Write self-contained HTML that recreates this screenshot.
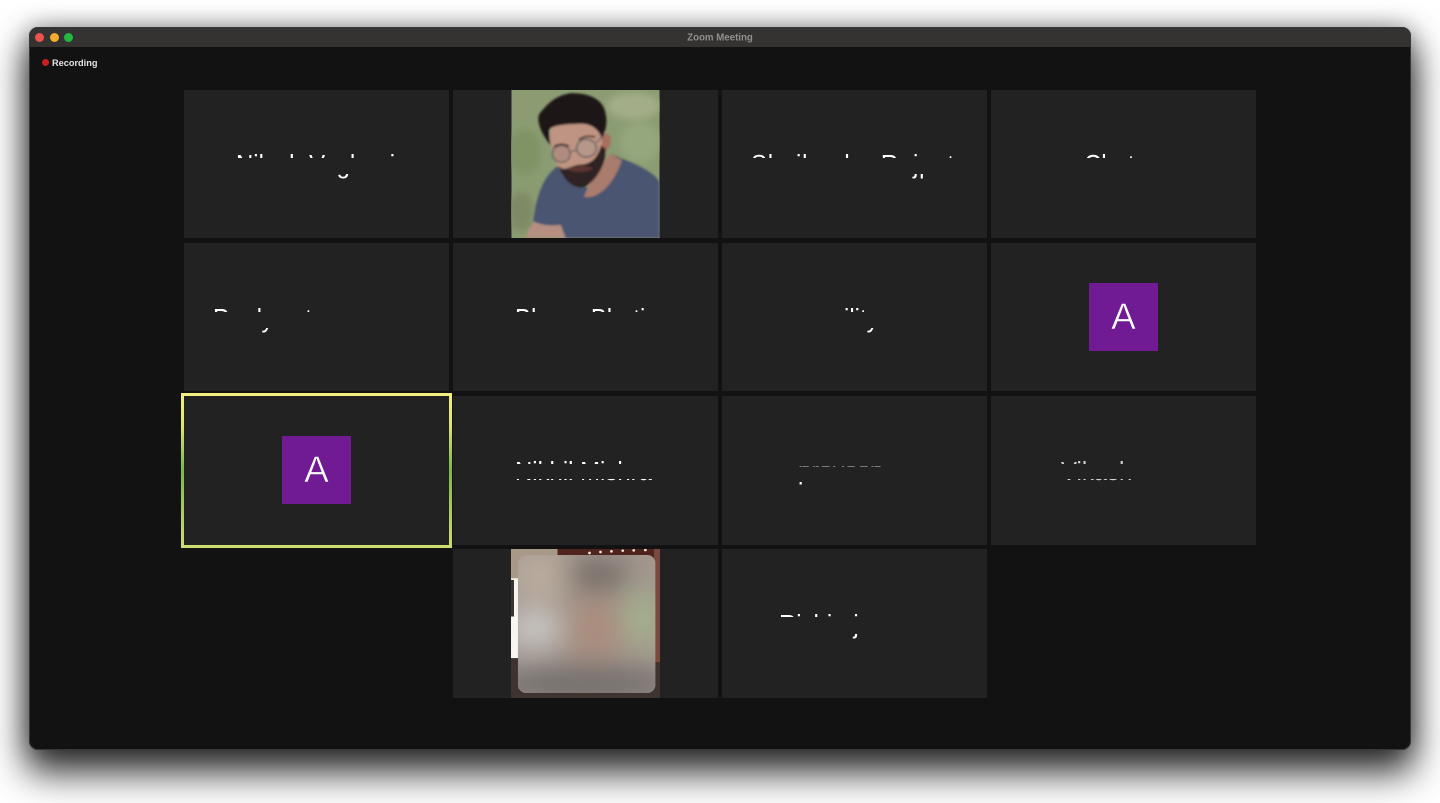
<!DOCTYPE html>
<html><head><meta charset="utf-8"><title>Zoom Meeting</title>
<style>
html,body{margin:0;padding:0;width:1440px;height:803px;overflow:hidden;background:#fff;font-family:"Liberation Sans",sans-serif}
.win{position:absolute;left:29px;top:27px;width:1382px;height:723px;background:#121212;border-radius:9px;box-shadow:0 20px 36px 3px rgba(0,0,0,.8),0 0 24px 0 rgba(0,0,0,.35)}
.edge{position:absolute;left:29px;top:27px;width:1380px;height:721px;border:1px solid #383838;border-radius:9px}
.bar{position:absolute;left:29px;top:27px;width:1382px;height:20px;background:#343332;border-radius:9px 9px 0 0}
.dot{position:absolute;width:9px;height:9px;border-radius:50%;top:33px}
.title{position:absolute;left:600px;width:240px;top:32px;text-align:center;font-size:9.7px;line-height:12px;font-weight:bold;color:#918f8e;transform:translateY(0.500px)}
.rec{position:absolute;left:52px;top:57px;font-size:9.2px;line-height:12px;font-weight:bold;color:#e4e4e4}
.t{position:absolute;background:#222;overflow:hidden}
.n{position:absolute;white-space:nowrap;font-size:26px;line-height:30px;color:#fff;transform:scaleX(.92);transform-origin:0 0}
.c{position:absolute;left:0;right:0;background:#222}
.av{position:absolute;background:#701a93;color:#fff;font-size:37px;line-height:68px;text-align:center;width:69px;height:68px;-webkit-text-stroke:.6px #701a93}
</style></head><body>
<div class="win"></div>
<div class="bar"></div>
<div class="edge"></div>
<div class="dot" style="left:35px;background:#ef5350"></div>
<div class="dot" style="left:49.500px;background:#f5ab2e"></div>
<div class="dot" style="left:64px;background:#22b83f"></div>
<div class="title">Zoom Meeting</div>
<div class="dot" style="left:42px;top:59px;width:7px;height:7px;background:#c81e1e"></div>
<div class="rec">Recording</div>

<!-- row 1 -->
<div class="t" style="left:184px;top:90px;width:265px;height:148px"><div class="n" style="left:52px;top:59px">Nilesh Vaghani</div><div class="c" style="top:68px;height:16px"></div></div>
<div class="t" style="left:453px;top:90px;width:265px;height:148px">
<svg style="position:absolute;left:58px;top:0" width="149" height="148" viewBox="31 12 448 448">
<defs><filter id="b1"><feGaussianBlur stdDeviation="3"/></filter><filter id="b2"><feGaussianBlur stdDeviation="12"/></filter><filter id="b3"><feGaussianBlur stdDeviation="42"/></filter></defs>
<rect x="31" y="12" width="448" height="448" fill="#8b9c72"/>
<g filter="url(#b2)"><ellipse cx="400" cy="60" rx="80" ry="40" fill="#a3ae88"/><ellipse cx="70" cy="200" rx="50" ry="70" fill="#7f9365"/><ellipse cx="420" cy="170" rx="60" ry="60" fill="#96a77e"/><ellipse cx="60" cy="380" rx="40" ry="60" fill="#7d8a66"/></g>
<g filter="url(#b1)">
<path d="M75 460C80 430 100 410 120 395L180 420L195 460Z" fill="#b58f80"/>
<path d="M97 410C105 340 125 270 175 240L215 260C240 320 290 345 330 205L370 222C420 240 465 265 479 290V460H195L180 420C150 425 120 420 97 410Z" fill="#4a5471"/>
<path d="M250 335C290 345 340 300 365 225L330 205L270 290Z" fill="#a97c6d"/>
<path d="M148 160C145 130 160 95 220 85C270 80 310 110 318 150C325 200 310 250 270 295C240 315 200 280 175 250C160 225 150 190 148 160Z" fill="#c09482"/>
<path d="M305 150C322 135 335 150 330 175C325 195 315 200 305 195Z" fill="#a9705f"/>
<path d="M172 240C190 262 205 243 235 238C265 238 290 225 302 180L316 190C318 240 285 290 250 307C215 310 190 285 172 240Z" fill="#2d2320"/>
<path d="M200 252C220 240 260 238 278 250C262 262 220 265 200 252Z" fill="#5b3430"/>
<path d="M150 180C125 150 105 110 115 85C140 55 160 30 210 22C265 20 310 40 316 85C322 110 315 140 305 160C295 130 270 110 230 115C190 115 160 120 145 130C143 145 148 165 150 180Z" fill="#1d1719"/>
<ellipse cx="182" cy="205" rx="27" ry="26" fill="#8f7f78" fill-opacity=".35" stroke="#5c5a60" stroke-width="4"/>
<ellipse cx="258" cy="188" rx="30" ry="27" fill="#a89b94" fill-opacity=".4" stroke="#55545a" stroke-width="4"/>
<path d="M155 186L160 190M209 200L228 193M288 172L306 152" stroke="#6a6870" stroke-width="4"/>
<path d="M160 183C175 175 190 175 205 182M235 163C250 150 270 150 285 155" stroke="#251c1c" stroke-width="5" fill="none"/>
</g>
</svg></div>
<div class="t" style="left:722px;top:90px;width:265px;height:148px"><div class="n" style="left:29px;top:59px;letter-spacing:.87px">Shailendra Rajput</div><div class="c" style="top:68px;height:16px"></div></div>
<div class="t" style="left:991px;top:90px;width:265px;height:148px"><div class="n" style="left:93px;top:59px">Chetan</div><div class="c" style="top:68px;height:16px"></div></div>

<!-- row 2 -->
<div class="t" style="left:184px;top:243px;width:265px;height:148px"><div class="n" style="left:29px;top:60px;letter-spacing:-.54px">Pradyumt</div><div class="c" style="top:69px;height:16px"></div></div>
<div class="t" style="left:453px;top:243px;width:265px;height:148px"><div class="n" style="left:62px;top:60px">Bhanu Bhatia</div><div class="c" style="top:69px;height:16px"></div></div>
<div class="t" style="left:722px;top:243px;width:265px;height:148px"><div class="n" style="left:122px;top:60px">ility</div><div class="c" style="top:69px;height:16px"></div></div>
<div class="t" style="left:991px;top:243px;width:265px;height:148px"><div class="av" style="left:98px;top:40px">A</div></div>

<!-- row 3 -->
<div class="t" style="left:184px;top:396px;width:265px;height:149px"><div class="av" style="left:98px;top:40px">A</div></div>
<div style="position:absolute;left:181px;top:393px;width:271px;height:155px;background:linear-gradient(180deg,#f2ef7f 0%,#dfe47a 20%,#7cb84a 50%,#a9c95f 75%,#cfdd72 100%);clip-path:polygon(0 0,100% 0,100% 100%,0 100%,0 3px,3px 3px,3px 152px,268px 152px,268px 3px,0 3px)"></div>
<div class="t" style="left:453px;top:396px;width:265px;height:149px"><div class="n" style="left:62px;top:60px">Nikhil Mishra</div><div class="c" style="top:68px;height:14.500px"></div></div>
<div class="t" style="left:722px;top:396px;width:265px;height:149px"><div class="n" style="left:76px;top:59px">pravesh</div><div class="c" style="top:0;height:69.500px"></div><div class="c" style="top:69.500px;height:1px;background:rgba(34,34,34,.6)"></div><div class="c" style="top:70.500px;height:15.500px"></div></div>
<div class="t" style="left:991px;top:396px;width:265px;height:149px"><div class="n" style="left:70px;top:60px;opacity:.8">Vikash</div><div class="c" style="top:68px;height:15px"></div></div>

<!-- row 4 -->
<div class="t" style="left:453px;top:549px;width:265px;height:149px">
<svg style="position:absolute;left:58px;top:0" width="149" height="149" viewBox="31 12 448 448">
<rect x="31" y="12" width="448" height="448" fill="#3f3330"/>
<rect x="31" y="12" width="140" height="90" fill="#a89888"/>
<rect x="171" y="12" width="290" height="20" fill="#4f241e"/>
<rect x="461" y="12" width="18" height="340" fill="#7a4a3c"/>
<rect x="31" y="100" width="21" height="240" fill="#f8f6f0"/>
<rect x="31" y="105" width="9" height="110" fill="#3c3230"/>
<g fill="#f3eadb"><circle cx="267" cy="24" r="4"/><circle cx="300" cy="21" r="4"/><circle cx="333" cy="19" r="4"/><circle cx="367" cy="17" r="4"/><circle cx="400" cy="16" r="4"/><circle cx="435" cy="15" r="4"/></g>
<rect x="52" y="30" width="413" height="415" rx="24" fill="#a3978f"/>
<g clip-path="url(#cp)"><g filter="url(#b3)">
<ellipse cx="120" cy="90" rx="90" ry="70" fill="#bcae9f"/>
<ellipse cx="290" cy="90" rx="100" ry="45" fill="#6f6764"/>
<ellipse cx="280" cy="250" rx="90" ry="90" fill="#aa8d7e"/>
<ellipse cx="100" cy="250" rx="80" ry="60" fill="#cbc9c6"/>
<ellipse cx="430" cy="220" rx="55" ry="85" fill="#a3b48b"/>
<ellipse cx="250" cy="420" rx="280" ry="60" fill="#736e6c"/>
</g></g>
<defs><clipPath id="cp"><rect x="52" y="30" width="413" height="415" rx="24"/></clipPath></defs>
</svg></div>
<div class="t" style="left:722px;top:549px;width:265px;height:149px"><div class="n" style="left:57px;top:60px">Rishiraj</div><div class="c" style="top:68px;height:16.500px"></div></div>
</body></html>
